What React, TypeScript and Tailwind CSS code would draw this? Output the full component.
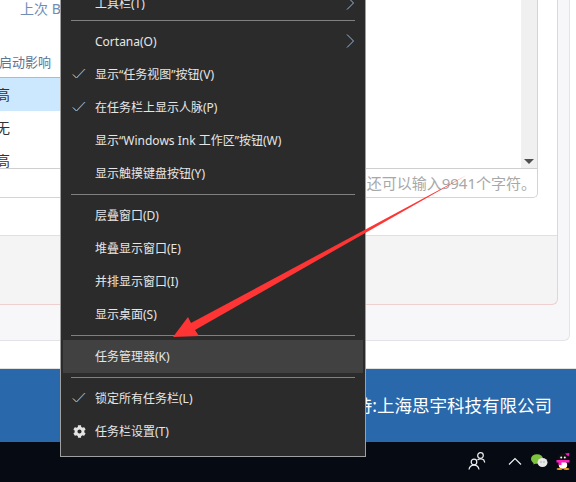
import { FaCog } from 'react-icons/fa';

const fontStack = { fontFamily: '"Noto Sans", "Noto Sans CJK SC", sans-serif' };

function Check() {
  return (
    <svg width="14" height="12" viewBox="0 0 14 12" fill="none" className="absolute left-[9px] top-[10px]">
      <path d="M0.6 6.5 L4.1 10 L12.6 1" stroke="#e0a860" strokeWidth="0.7" />
      <path d="M1.2 6.5 L4.7 10 L13.2 1" stroke="#6fb0ec" strokeWidth="0.9" />
    </svg>
  );
}

function Chevron() {
  return (
    <svg width="9" height="14" viewBox="0 0 9 14" fill="none" className="absolute right-[8px] top-[9px]">
      <path d="M1 0.5 L7.5 7 L1 13.5" stroke="#9ab8d8" strokeWidth="1" />
    </svg>
  );
}

function Item({ label, checked, more, active, gear }: { label: string; checked?: boolean; more?: boolean; active?: boolean; gear?: boolean }) {
  return (
    <div className={`relative mx-[2px] flex h-[33px] items-center pl-[32px] text-[12px] text-[#e6e6e6] ${active ? 'bg-[#414141]' : ''}`}>
      {checked && <Check />}
      {gear && <FaCog className="absolute left-[10px] top-[10px] h-[13px] w-[13px] text-[#e4e4e4]" />}
      <span className="whitespace-nowrap">{label}</span>
      {more && <Chevron />}
    </div>
  );
}

function Sep() {
  return <div className="mx-[10px] h-px bg-[#808080]" />;
}

function ContextMenu() {
  return (
    <div className="absolute left-[60px] top-[-14px] w-[306px] border border-[#a0a0a0] bg-[#2b2b2b] pb-[8px]" style={fontStack}>
      <Item label="工具栏(T)" more />
      <Sep />
      <div className="pt-[4px]">
        <Item label="Cortana(O)" more />
        <Item label="显示“任务视图”按钮(V)" checked />
        <Item label="在任务栏上显示人脉(P)" checked />
        <Item label="显示“Windows Ink 工作区”按钮(W)" />
        <Item label="显示触摸键盘按钮(Y)" />
      </div>
      <div className="pt-[4px]"><Sep /></div>
      <div className="pt-[4px]">
        <Item label="层叠窗口(D)" />
        <Item label="堆叠显示窗口(E)" />
        <Item label="并排显示窗口(I)" />
        <Item label="显示桌面(S)" />
      </div>
      <div className="pt-[4px]"><Sep /></div>
      <div className="pt-[4px]">
        <Item label="任务管理器(K)" active />
      </div>
      <div className="pt-[4px]"><Sep /></div>
      <div className="pt-[4px]">
        <Item label="锁定所有任务栏(L)" checked />
        <Item label="任务栏设置(T)" gear />
      </div>
    </div>
  );
}

function Arrow() {
  return (
    <svg width="576" height="482" viewBox="0 0 576 482" className="pointer-events-none absolute left-0 top-0">
      <polygon points="467,175 191,323 188,317 173,337 199,336 195,330" fill="#ff3535" />
    </svg>
  );
}

function Row({ text, selected }: { text: string; selected?: boolean }) {
  return (
    <div className={`flex h-[33px] items-center text-[14px] text-[#333] ${selected ? 'bg-[#cce8ff]' : ''}`}>
      <span className="ml-[-4px]">{text}</span>
    </div>
  );
}

function TrayIcons() {
  return (
    <div className="flex items-center justify-end">
      <svg width="18" height="18" viewBox="0 0 18 18" fill="none" stroke="#f0f0f0" strokeWidth="1.2">
        <circle cx="6" cy="10" r="2.8" />
        <path d="M1 17.5 C1.5 14.5 3.5 13.2 6 13.2 C8.5 13.2 10.5 14.5 11 17.5" />
        <circle cx="12.5" cy="3.5" r="2.8" />
        <path d="M9.5 8 C10.5 6.8 14.5 6.5 15.8 8 L16.8 10.5" />
      </svg>
      <svg width="14" height="8" viewBox="0 0 14 8" fill="none" stroke="#f0f0f0" strokeWidth="1.2" className="ml-[22px]">
        <path d="M1 7.5 L7 1.5 L13 7.5" />
      </svg>
      <svg width="17" height="14" viewBox="0 0 17 14" className="ml-[9px]">
        <ellipse cx="6" cy="5" rx="6" ry="4.8" fill="#7cc43c" />
        <path d="M2.5 8 L2.5 10.5 L5.5 9 Z" fill="#7cc43c" />
        <ellipse cx="11.5" cy="8.5" rx="5" ry="4.5" fill="#e8e8e8" />
        <circle cx="10" cy="8" r="0.7" fill="#999" />
        <circle cx="13" cy="8" r="0.7" fill="#999" />
      </svg>
      <svg width="14" height="17" viewBox="0 0 14 17" className="ml-[8px] mr-[6px]">
        <ellipse cx="7" cy="7.5" rx="5.5" ry="7.5" fill="#111" />
        <ellipse cx="7" cy="12" rx="4.2" ry="3.8" fill="#fff" />
        <circle cx="5.2" cy="4.5" r="1" fill="#fff" />
        <circle cx="8.8" cy="4.5" r="1" fill="#fff" />
        <rect x="0.5" y="7" width="13" height="2.5" fill="#ff1fbf" />
        <rect x="2.5" y="9" width="3" height="3" fill="#ff1fbf" />
        <path d="M9 0.5 L13.5 0 L12.5 3.5 Z" fill="#ff1fbf" />
        <ellipse cx="3.5" cy="16" rx="3" ry="1" fill="#f0a020" />
        <ellipse cx="10.5" cy="16" rx="3" ry="1" fill="#f0a020" />
      </svg>
    </div>
  );
}

export default function App() {
  return (
    <div className="relative flex h-[482px] w-[576px] flex-col overflow-hidden bg-white" style={fontStack}>
      {/* page */}
      <div className="h-[368px] shrink-0 pr-[6px]">
        <div className="h-[341px] rounded-br-[6px] border-r border-b border-[#e3e3ea] bg-[#f7f7fa] pr-[11px]">
          <div className="flex h-[305px] flex-col rounded-br-[6px] border-r border-b border-[#f0cfcf] bg-[#f4f4f4]">
            <div className="h-[236px] shrink-0 border-b border-[#e0e0e0] bg-white pr-[19px]">
              <div className="h-[198px] rounded-br-[5px] border-r border-b border-[#d4d4d4]">
                <div className="flex h-[169px] border-b border-[#cfcfcf]">
                  <div className="w-[60px]">
                    <div className="h-[20px] whitespace-nowrap pl-[20px] text-[14px] leading-[18px] text-[#6f8db5]">上次 B</div>
                    <div className="mt-[29px] ml-[-1px] flex h-[28px] items-center whitespace-nowrap text-[13px] text-[#5b7596]">启动影响</div>
                    <div className="border-t border-[#b9b9b9]">
                      <Row text="高" selected />
                      <Row text="无" />
                      <Row text="高" />
                    </div>
                  </div>
                  <div className="flex-1" />
                  <div className="relative w-[16px] bg-[#f0f0f0]">
                    <div className="absolute bottom-[4px] left-[3px] h-0 w-0 border-x-[5px] border-t-[5px] border-x-transparent border-t-[#505050]" />
                  </div>
                </div>
                <div className="flex h-[28px] items-center justify-end whitespace-nowrap pr-[1px] text-[15px] text-[#a8a8a8]">
                  您还可以输入9941个字符。
                </div>
              </div>
            </div>
          </div>
        </div>
      </div>

      {/* footer band */}
      <div className="flex h-[74px] shrink-0 items-center justify-end border-t border-[#e0e0e0] bg-[#2868ab] pr-[24px] text-[17.5px] text-white">
        技术支持:上海思宇科技有限公司
      </div>

      {/* taskbar */}
      <div className="flex h-[40px] shrink-0 items-center justify-end bg-[#060a12] pb-[2px]">
        <TrayIcons />
      </div>

      <ContextMenu />
      <Arrow />
    </div>
  );
}
